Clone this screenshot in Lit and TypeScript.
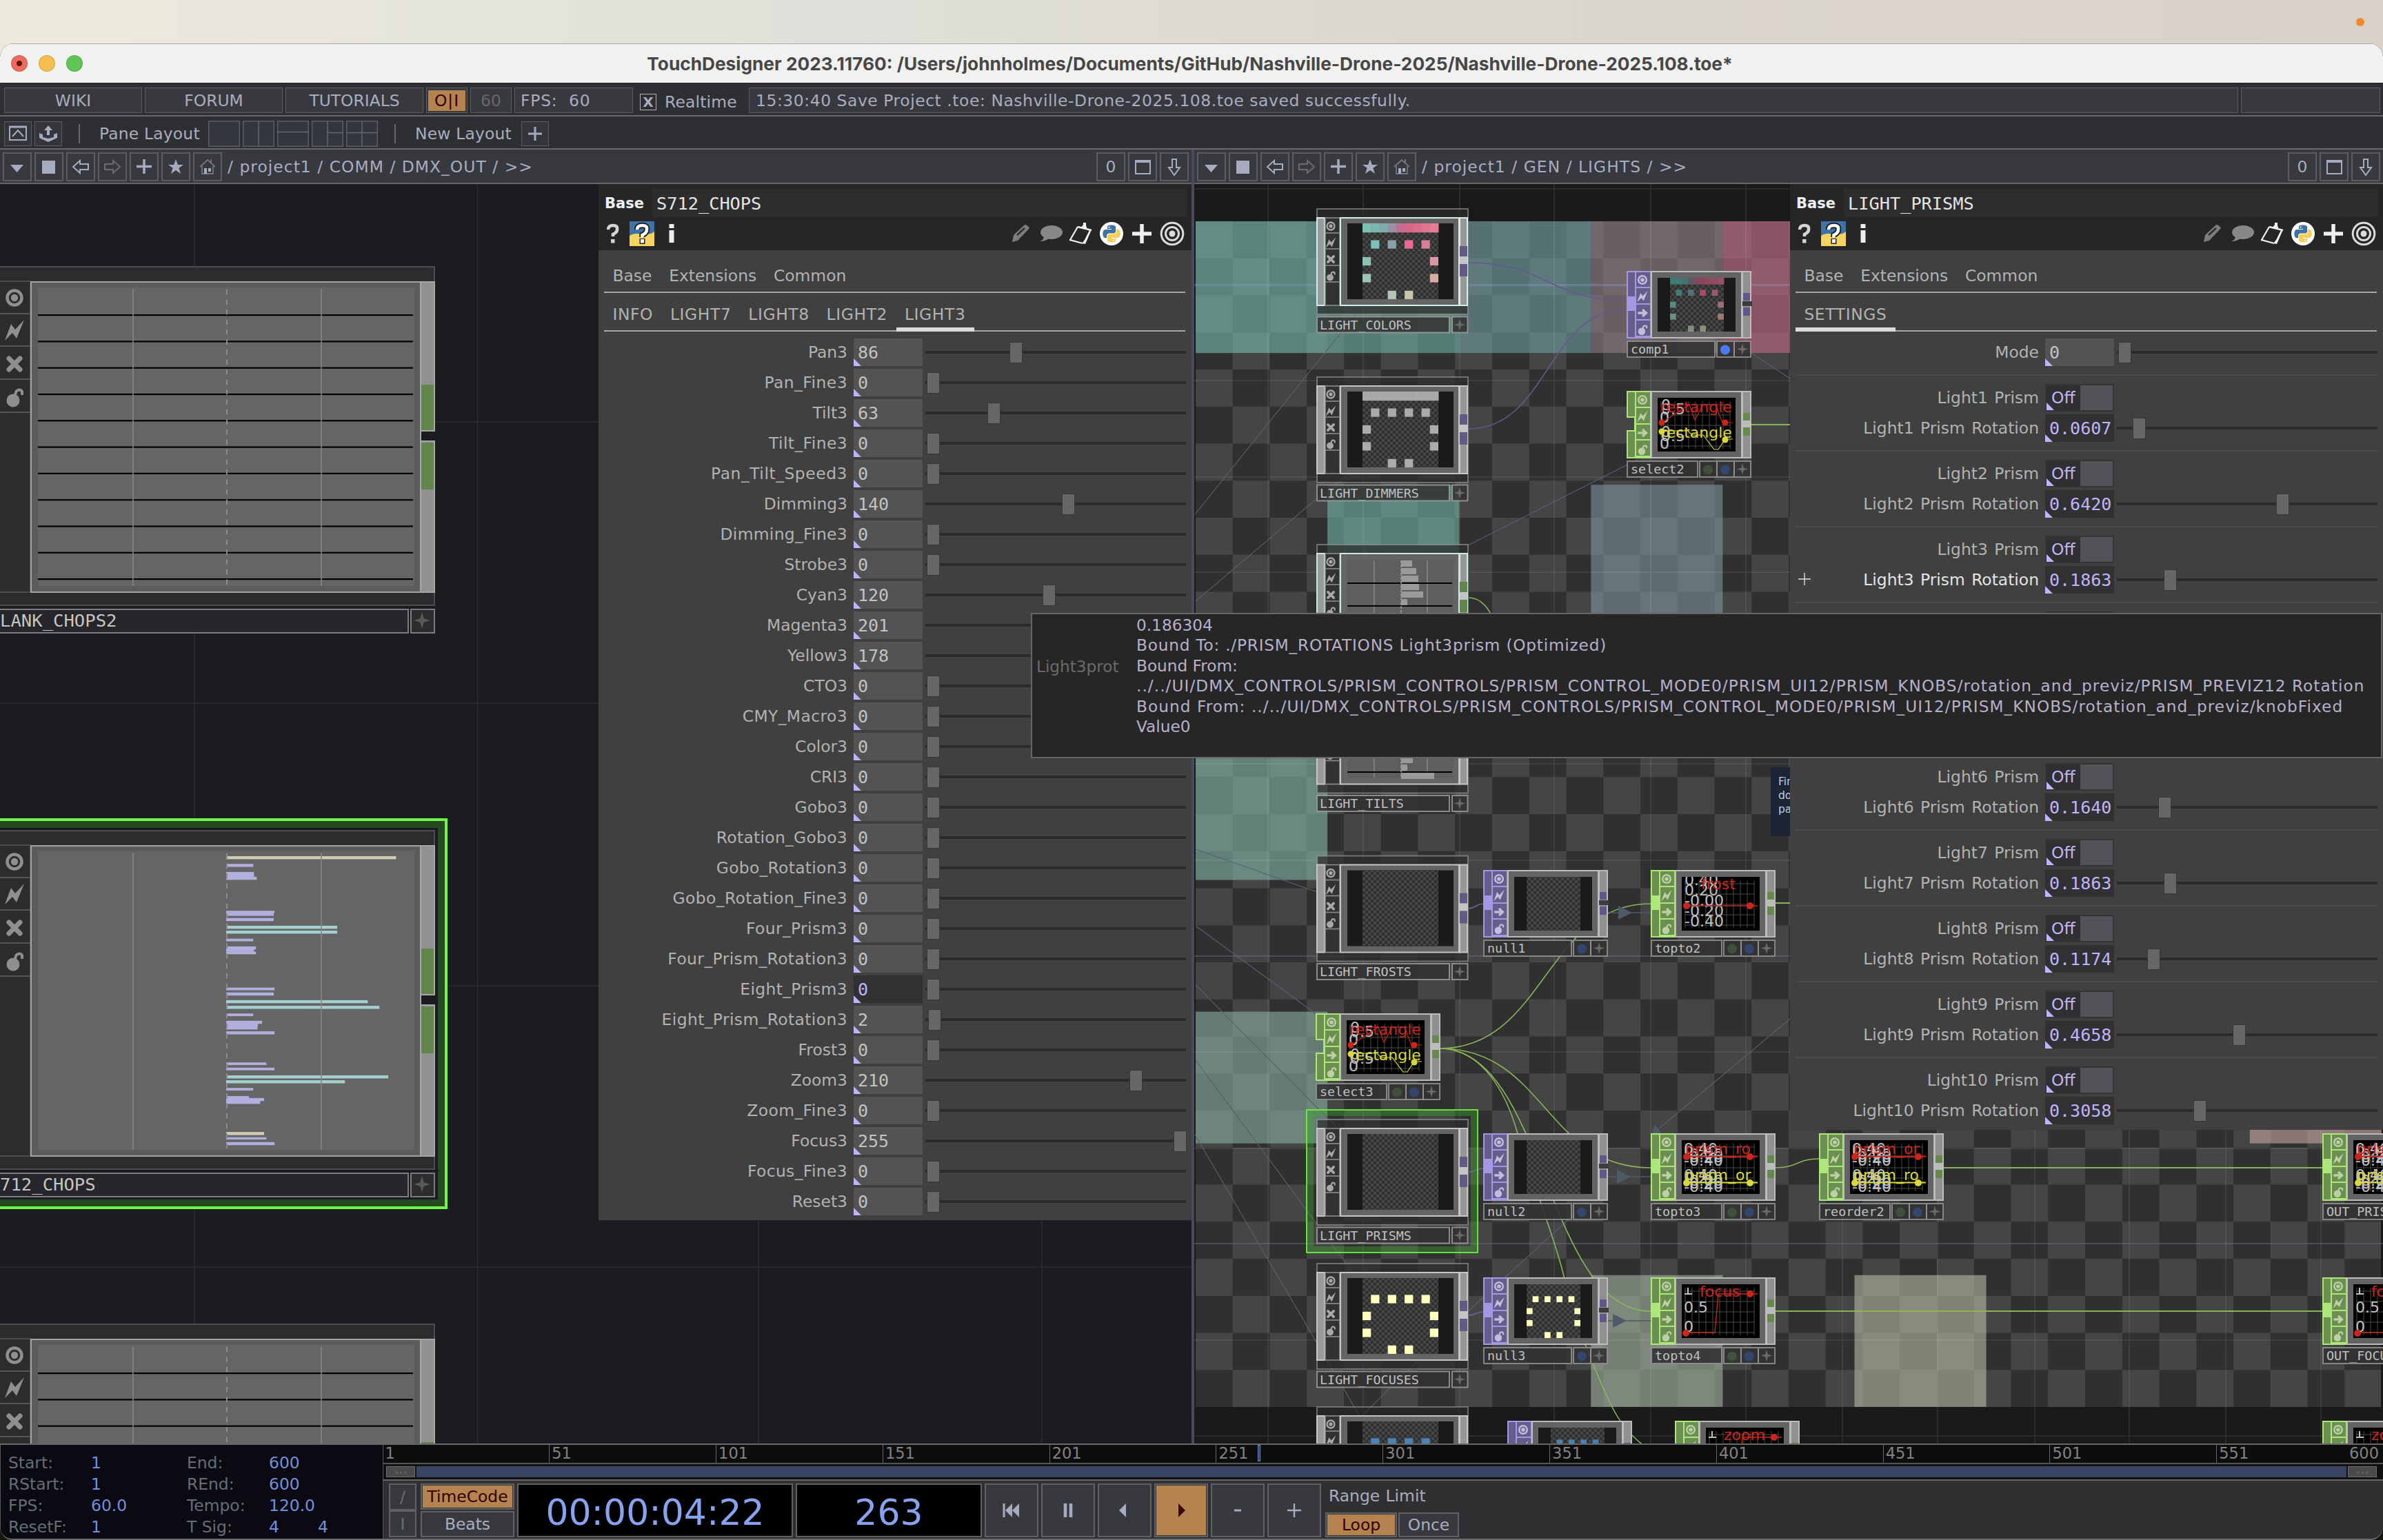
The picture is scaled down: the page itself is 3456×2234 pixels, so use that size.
import { LitElement, html, svg, css, nothing } from "lit";
import { customElement, property } from "lit/decorators.js";

/* ---------- shared data ---------- */

const PY_BLUE =
  "M14.25.18l.9.2.73.26.59.3.45.32.34.34.25.34.16.33.1.3.04.26.02.2-.01.13V8.5l-.05.63-.13.55-.21.46-.26.38-.3.31-.33.25-.35.19-.35.14-.33.1-.3.07-.26.04-.21.02H8.77l-.69.05-.59.14-.5.22-.41.27-.33.32-.27.35-.2.36-.15.37-.1.35-.07.32-.04.27-.02.21v3.06H3.17l-.21-.03-.28-.07-.32-.12-.35-.18-.36-.26-.36-.36-.35-.46-.32-.59-.28-.73-.21-.88-.14-1.05-.05-1.23.06-1.22.16-1.04.24-.87.32-.71.36-.57.4-.44.42-.33.42-.24.4-.16.36-.1.32-.05.24-.01h.16l.06.01h8.16v-.83H6.18l-.01-2.75-.02-.37.05-.34.11-.31.17-.28.25-.26.31-.23.38-.2.44-.18.51-.15.58-.12.64-.1.71-.06.77-.04.84-.02 1.27.05zm-6.3 1.98l-.23.33-.08.41.08.41.23.34.33.22.41.09.41-.09.33-.22.23-.34.08-.41-.08-.41-.23-.33-.33-.22-.41-.09-.41.09z";
const PY_YELLOW =
  "M21.1 6.11l.28.06.32.12.35.18.36.27.36.35.35.47.32.59.28.73.21.88.14 1.04.05 1.23-.06 1.23-.16 1.04-.24.86-.32.71-.36.57-.4.45-.42.33-.42.24-.4.16-.36.09-.32.05-.24.02-.16-.01h-8.22v.82h5.84l.01 2.76.02.36-.05.34-.11.31-.17.29-.25.25-.31.24-.38.2-.44.17-.51.15-.58.13-.64.09-.71.07-.77.04-.84.01-1.27-.04-1.07-.14-.9-.2-.73-.25-.59-.3-.45-.33-.34-.34-.25-.34-.16-.33-.1-.3-.04-.25-.02-.2.01-.13v-5.34l.05-.64.13-.54.21-.46.26-.38.3-.32.33-.24.35-.2.35-.14.33-.1.3-.06.26-.04.21-.02.13-.01h5.84l.69-.05.59-.14.5-.21.41-.28.33-.32.27-.35.2-.36.15-.36.1-.35.07-.32.04-.28.02-.21V6.07h2.09l.14.01zm-6.47 14.25l-.23.33-.08.41.08.41.23.33.33.23.41.08.41-.08.33-.23.23-.33.08-.41-.08-.41-.23-.33-.33-.23-.41-.08-.41.08z";

const TEAL = "#a6d0cf";
const LILAC = "#b0afde";
const SAND = "#d0ceb2";

/* ---------- node drawing helpers ---------- */

type Flag = "view" | "bolt" | "cross" | "lock" | "arrow";

function flagIcon(kind: Flag, x: number, y: number, s: number, c: string) {
  const t = `translate(${x} ${y}) scale(${s})`;
  switch (kind) {
    case "view":
      return svg`<g transform=${t}><circle r="10.5" fill="none" stroke=${c} stroke-width="4.5"/><circle r="5.2" fill=${c}/></g>`;
    case "bolt":
      return svg`<path transform=${t} fill=${c} d="M-14 15L-5-9L1-1L14-15L3 12L-3 4Z"/>`;
    case "cross":
      return svg`<path transform=${t} stroke=${c} stroke-width="7" stroke-linecap="round" d="M-8-8L8 8M8-8L-8 8"/>`;
    case "lock":
      return svg`<g transform=${t}><circle cx="-2" cy="5" r="9.5" fill=${c}/><path d="M1-3L2-7A5 5 0 0 1 11-8V-3" fill="none" stroke=${c} stroke-width="4"/></g>`;
    default:
      return svg`<path transform=${t} fill="none" stroke=${c} stroke-width="6" d="M-12 0H8M0-9L10 0L0 9"/>`;
  }
}

const star = (x: number, y: number, r: number, c = "#6a6a6a") => {
  const k = r * 0.22;
  return svg`<path fill=${c} d="M${x} ${y - r}L${x + k} ${y - k}L${x + r} ${y}L${x + k} ${y + k}L${x} ${y + r}L${x - k} ${y + k}L${x - r} ${y}L${x - k} ${y - k}Z"/>`;
};

const rect = (x: number, y: number, w: number, h: number, fill: string, stroke = "none", sw = 2, o = 1) =>
  svg`<rect x=${x} y=${y} width=${w} height=${h} fill=${fill} stroke=${stroke} stroke-width=${sw} opacity=${o} />`;

const range = (n: number) => Array.from({ length: n }, (_, i) => i);

/* Large operator in the left network */
function bigNode(name: string, top: number, body: unknown) {
  const b = top + 21;
  return svg`
    ${rect(-4, top, 634, 491, "#2b2d2c", "#4c4d52", 2)}
    ${rect(-4, b, 48, 451, "#2b2d2c", "#4c4d52")}
    ${[47, 94, 142, 190].map((d) => svg`<line x1="0" x2="44" y1=${b + d} y2=${b + d} stroke="#55565b" stroke-width="2"/>`)}
    ${flagIcon("view", 21, b + 24, 1, "#8f8f8f")}
    ${flagIcon("bolt", 21, b + 71, 1, "#8f8f8f")}
    ${flagIcon("cross", 21, b + 120, 1, "#8f8f8f")}
    ${flagIcon("lock", 21, b + 168, 1, "#8f8f8f")}
    ${rect(45, b + 1, 565, 450, "#5c5c5c", "#a2a2a2")}
    ${rect(55, b + 9, 546, 433, "#656565")}
    ${body}
    ${[193, 466].map((x) => svg`<line x1=${x} x2=${x} y1=${b + 11} y2=${b + 442} stroke="#868686" stroke-width="1.6"/>`)}
    <line x1="329" x2="329" y1=${b + 12} y2=${b + 440} stroke="#8c8c8c" stroke-width="2" stroke-dasharray="7.5 7"/>
    ${rect(610, b + 1, 20, 450, "#919191", "#a6a6a6")}
    ${rect(611, b + 150, 18, 66, "#63854b")}
    ${rect(611, b + 217, 21, 14, "#1b1c20")}
    <path d=${`M610 ${b + 217}H631M610 ${b + 232}H631`} stroke="#a6a6a6" stroke-width="2"/>
    ${rect(611, b + 234, 18, 68, "#63854b")}
    ${rect(-4, top + 492, 640, 3, "#1b1c20")}
    ${rect(-4, top + 497, 596, 34, "#26262a", "#7c7c80")}
    ${rect(596, top + 497, 34, 34, "#2b2d2c", "#7c7c80")}
    ${star(612, top + 513, 12, "#57595a")}
    <text x="0" y=${top + 522} class="big">${name}</text>`;
}

/* 9 × 9 fixture layout shown inside TOP viewers */
function fixtures(x: number, y: number, size: number, c: string[], strip?: string[]) {
  const u = size / 9;
  const cells = [[1, 2], [3, 2], [5, 2], [7, 2], [0, 4], [8, 4], [0, 6], [8, 6], [3, 8], [5, 8]];
  return svg`
    ${strip ? strip.map((s, i) => rect(x + i * u, y, u + 0.5, u + 1, s)) : nothing}
    ${cells.map(([cx, cy], i) => rect(x + cx * u, y + cy * u, u, u, c[i % c.length]))}`;
}

function compNode(name: string, y: number, view: unknown, green = false, tint = "#c6c6c6") {
  const x = 1909;
  const seps = [36, 59, 83, 107];
  const out = green ? "#638547" : "#635a88";
  const flags: Flag[] = ["view", "bolt", "cross", "lock"];
  return svg`
    ${rect(x + 1, y + 1, 219, 153, "#2c2c2c", "#8a8a8a", 2, 0.72)}
    ${rect(x + 1, y + 14, 11, 127, "#9a9a9a", tint, 2)}
    ${rect(x + 13, y + 14, 21, 127, "#323232", "#8c8c8c", 1.6)}
    ${seps.map((d) => svg`<line x1=${x + 13} x2=${x + 34} y1=${y + d} y2=${y + d} stroke="#8c8c8c" stroke-width="1.6"/>`)}
    ${flags.map((f, i) => flagIcon(f, x + 21, y + 26 + i * 24, 0.52, "#a8a8a8"))}
    ${rect(x + 35, y + 14, 172, 127, "#646464", tint, 2)}
    ${view}
    ${rect(x + 208, y + 14, 11, 127, "#979797", tint, 2)}
    ${rect(x + 208, y + 55, 11, 15, out)}
    ${rect(x + 208, y + 70, 11, 11, "#c4c4c4")}
    ${rect(x + 208, y + 81, 11, 18, out)}
    ${rect(x + 1, y + 157.5, 192, 23, "#333", "#9a9a9a", 2, 0.85)}
    ${rect(x + 197, y + 157.5, 22.5, 23, "#333", "#9a9a9a", 2, 0.85)}
    ${star(x + 208, y + 169, 8.5)}
    <text x=${x + 5} y=${y + 175.5} class="name">${name}</text>`;
}

const compTop = (y: number, inner: unknown = nothing) => svg`
  ${rect(1954, y + 22, 154, 110, "#1a1a1a")}
  ${rect(1976, y + 22, 110, 110, "url(#fine)")}
  ${inner}`;

function compChop(y: number, bars: [number, number][], lines: number[]) {
  return svg`
    ${rect(1954, y + 22, 154, 110, "#5e5e5e")}
    ${[1993, 2070].map((x) => svg`<line x1=${x} x2=${x} y1=${y + 24} y2=${y + 132} stroke="#868686" stroke-width="1.6"/>`)}
    ${lines.map((l) => rect(1954, l - 1, 152, 2, "#000"))}
    ${bars.map(([by, w]) => rect(2032, by, w, 9, "#9a9a9a"))}
    <line x1="2032" x2="2032" y1=${y + 24} y2=${y + 132} stroke="#999" stroke-width="1.6" stroke-dasharray="4 2"/>`;
}

interface OpOpts {
  green?: boolean;
  dots?: number;
  inputs?: "one" | "split";
  blueOn?: boolean;
}

function opNode(name: string, x: number, y: number, view: unknown, o: OpOpts = {}) {
  const h = 98;
  const g = o.green;
  const edge = g ? "#aee67c" : "#a597e2";
  const fill = g ? "#6b8f50" : "#665d8c";
  const glyph = g ? "#bcd0a4" : "#c4bdd8";
  const out = g ? "#678a4c" : "#60578a";
  const dots = o.dots ?? (g ? 2 : 1);
  const lw = dots === 2 ? 102 : 127;
  const flags: Flag[] = ["view", "bolt", "arrow", "lock"];
  return svg`
    ${o.inputs === "split"
      ? svg`<path fill=${fill} stroke=${edge} stroke-width="2" d=${`M${x + 1} ${y + 1}H${x + 13}V${y + h - 1}H${x + 1}V${y + 58}H${x + 12}V${y + 38}H${x + 1}Z`}/>`
      : svg`${rect(x + 1, y + 1, 12, h - 2, fill, edge)}${rect(x, y + 37, 13, 21, edge)}`}
    ${rect(x + 13, y + 1, 22, h - 2, fill, edge)}
    ${[24, 48, 71, 95].map((d) => svg`<line x1=${x + 13} x2=${x + 35} y1=${y + d} y2=${y + d} stroke=${edge} stroke-width="2"/>`)}
    ${flags.map((f, i) => flagIcon(f, x + 23, y + 13 + i * 24, 0.55, glyph))}
    ${rect(x + 36, y + 1, 131, h - 2, "#636363", "#bcbcbc")}
    ${view}
    ${rect(x + 168, y + 1, 12, h - 2, "#909090", "#bcbcbc")}
    ${rect(x + 169, y + 32, 10, 11, out)}
    ${g ? rect(x + 167, y + 43, 13, 10, "#bcbcbc") : rect(x + 168, y + 44, 14, 7, "#3c3c3c")}
    ${rect(x + 169, y + 53, 10, 12, out)}
    ${rect(x + 1, y + 102, lw, 23, "#333", "#8e8e8e", 2, 0.9)}
    ${rect(x + lw + 4, y + 102, 176 - lw, 23, "#333", "#8e8e8e", 2, 0.9)}
    ${dots === 2 ? svg`<line x1=${x + 131} x2=${x + 131} y1=${y + 102} y2=${y + 125} stroke="#8e8e8e" stroke-width="2"/><circle cx=${x + 118} cy=${y + 114.5} r="7" fill="#40503a"/>` : nothing}
    <line x1=${x + 156} x2=${x + 156} y1=${y + 102} y2=${y + 125} stroke="#8e8e8e" stroke-width="2"/>
    <circle cx=${x + 143} cy=${y + 114.5} r="7" fill=${o.blueOn ? "#4a7bf0" : "#34466c"}/>
    ${star(x + 168, y + 113.5, 8.5)}
    <text x=${x + 6} y=${y + 120} class="name">${name}</text>`;
}

const opTop = (x: number, y: number, inner: unknown = nothing) => svg`
  ${rect(x + 45, y + 10, 113, 78, "#1a1a1a")}
  ${rect(x + 63, y + 10, 78, 78, "url(#fine)")}
  ${inner}`;

function plot(x: number, y: number, kind: string) {
  const vx = x + 45;
  const vy = y + 10;
  const red = "#cb261c";
  const yel = "#d8d83c";
  const grid = svg`<path stroke="#4a4a4a" stroke-width="1" fill="none" d=${range(11).map((i) => `M${vx + 5 + i * 10} ${vy + 5}V${vy + 74}`).join("") + range(5).map((i) => `M${vx + 4} ${vy + 10 + i * 15}H${vx + 106}`).join("")}/>`;
  let body: unknown;
  if (kind === "rectangle") {
    body = svg`
      <text x=${vx + 5} y=${vy + 24} class="ax">0.5</text><text x=${vx + 5} y=${vy + 18} class="ax">0</text><text x=${vx + 3} y=${vy + 36} class="ax">0</text>
      <text x=${vx + 5} y=${vy + 63} class="ax">0.5</text><text x=${vx + 5} y=${vy + 57} class="ax">0</text><text x=${vx + 3} y=${vy + 74} class="ax">0</text>
      <path fill="none" stroke=${red} stroke-width="1.2" d=${`M${vx + 6} ${vy + 36}L${vx + 46} ${vy + 10}L${vx + 54} ${vy + 32}L${vx + 66} ${vy + 10}H${vx + 84}L${vx + 94} ${vy + 36}H${vx + 109}`}/>
      <path fill="none" stroke=${yel} stroke-width="1.2" d=${`M${vx + 6} ${vy + 48}H${vx + 44}L${vx + 50} ${vy + 54}H${vx + 66}L${vx + 82} ${vy + 75}H${vx + 88}L${vx + 98} ${vy + 60}H${vx + 109}`}/>
      <text x=${vx + 4} y=${vy + 21} fill=${red} class="ch">rectangle</text>
      <text x=${vx + 4} y=${vy + 58} fill=${yel} class="ch">rectangle</text>
      <circle cx=${vx + 6} cy=${vy + 36} r="4.6" fill=${red}/><circle cx=${vx + 98} cy=${vy + 36} r="4.6" fill=${red}/>
      <circle cx=${vx + 6} cy=${vy + 49} r="4.6" fill=${yel}/><circle cx=${vx + 98} cy=${vy + 61} r="4.6" fill=${yel}/>`;
  } else if (kind === "frost") {
    body = svg`
      ${[["0.40", 12], ["0.20", 27], ["-0.00", 42], ["-0.20", 57], ["-0.40", 72]].map(([t, d]) => svg`<text x=${vx + 4} y=${vy + Number(d)} class="ax">${t}</text>`)}
      <path stroke=${red} stroke-width="1.6" d=${`M${vx + 5} ${vy + 42}H${vx + 110}`}/>
      <text x=${vx + 28} y=${vy + 18} fill=${red} class="ch">frost</text>
      <circle cx=${vx + 7} cy=${vy + 42} r="5" fill=${red}/><circle cx=${vx + 99} cy=${vy + 42} r="5" fill=${red}/>`;
  } else if (kind.startsWith("prism")) {
    const [a, b] = kind === "prism-ro" ? ["prism_ro", "prism_or"] : ["prism_or", "prism_ro"];
    const stack = (o: number) => [["0.40", 20], ["0.20", 24], ["-0.00", 28], ["-0.20", 32], ["-0.40", 37]].map(([t, d]) => svg`<text x=${vx + 3} y=${vy + Number(d) + o} class="ax">${t}</text>`);
    body = svg`
      ${stack(0)}${stack(38)}
      <path stroke=${red} stroke-width="2" d=${`M${vx + 5} ${vy + 23.5}H${vx + 110}`}/>
      <path stroke=${yel} stroke-width="2" d=${`M${vx + 5} ${vy + 61.5}H${vx + 110}`}/>
      <text x=${vx + 5} y=${vy + 20} fill=${red} class="ch">${a}</text>
      <text x=${vx + 5} y=${vy + 58} fill=${yel} class="ch">${b}</text>
      <circle cx=${vx + 7} cy=${vy + 24} r="5" fill=${red}/><circle cx=${vx + 99} cy=${vy + 24} r="5" fill=${red}/>
      <circle cx=${vx + 7} cy=${vy + 62} r="5" fill=${yel}/><circle cx=${vx + 99} cy=${vy + 62} r="5" fill=${yel}/>`;
  } else {
    body = svg`
      <path d=${`M${vx + 9} ${vy + 5}V${vy + 14}M${vx + 4} ${vy + 14}H${vx + 15}`} stroke="#c0c0c0" stroke-width="2"/>
      <text x=${vx + 3} y=${vy + 41} class="ax">0.5</text><text x=${vx + 3} y=${vy + 69} class="ax">0</text>
      <path fill="none" stroke=${red} stroke-width="1.4" d=${`M${vx + 6} ${vy + 70}H${vx + 48}L${vx + 53} ${vy + 14}H${vx + 110}`}/>
      <text x=${vx + 26} y=${vy + 18} fill=${red} class="ch">${kind}</text>
      <circle cx=${vx + 6} cy=${vy + 71} r="5" fill=${red}/><circle cx=${vx + 99} cy=${vy + 14} r="5" fill=${red}/>`;
  }
  return svg`<svg x=${vx} y=${vy} width="113" height="78" viewBox=${`${vx} ${vy} 113 78`}>
    ${rect(vx, vy, 113, 78, "#000")}${grid}${body}</svg>`;
}

const wire = (x1: number, y1: number, x2: number, y2: number, c: string) => {
  const m = (x1 + x2) / 2;
  return svg`<path fill="none" stroke=${c} stroke-width="1.6" d=${`M${x1} ${y1}C${m} ${y1} ${m} ${y2} ${x2} ${y2}`}/>`;
};

/* ---------- left network ---------- */

@customElement("network-left")
export class NetworkLeft extends LitElement {
  static styles = css`
    :host { display: block; }
    svg { display: block; }
    .big { font: 25.6px "DejaVu Sans Mono", monospace; fill: #c4c4c4; }
  `;
  render() {
    const k = 0.5867;
    const bars: [number, number, number, string][] = [
      [104, 111, 1023, SAND], [123, 130, 654, LILAC], [143, 155, 656, LILAC], [155, 162, 663, LILAC],
      [239, 244, 709, LILAC], [244, 251, 707, LILAC], [257, 264, 707, LILAC], [276, 283, 871, TEAL],
      [288, 295, 871, TEAL], [308, 314, 654, LILAC], [327, 334, 661, LILAC], [334, 340, 656, LILAC],
      [340, 346, 661, LILAC], [429, 435, 709, LILAC], [441, 448, 707, LILAC], [460, 467, 950, TEAL],
      [474, 481, 980, TEAL], [493, 499, 654, LILAC], [511, 518, 677, LILAC], [518, 525, 666, LILAC],
      [525, 532, 665, LILAC], [537, 544, 709, LILAC], [614, 620, 688, LILAC], [627, 633, 709, LILAC],
      [646, 653, 1003, TEAL], [658, 665, 891, TEAL], [677, 683, 654, LILAC], [697, 702, 643, LILAC],
      [702, 709, 682, LILAC], [709, 716, 672, LILAC], [786, 793, 682, SAND], [799, 804, 688, LILAC],
      [811, 818, 709, LILAC],
    ];
    const flat = (start: number, n: number) => range(n).map((i) => rect(55, start + i * 38.3 - 1, 544, 2.2, "#000"));
    return html`<svg width="1728" height="1828" viewBox="0 266 1728 1828">
      ${rect(0, 266, 1728, 1828, "#1b1c20")}
      <path stroke="#2b2c32" stroke-width="1.5" d="M282 266V2094M692.5 266V2094M1100 266V2094M1511 266V2094M0 611H1728M0 1019H1728M0 1429H1728M0 1837H1728"/>
      ${bigNode("LANK_CHOPS2", 386, flat(456, 11))}
      ${rect(-8, 1188, 655, 563, "#234a20", "#70f848", 4)}
      ${rect(-8, 1200, 643, 539, "#1b1c20")}
      ${bigNode("712_CHOPS", 1204, bars.map(([a, b, x2, c]) => rect(328, 1180 + a * k, (x2 - 584) * 0.5612, (b - a) * k + 0.3, c)))}
      ${bigNode("", 1920, flat(1991, 11))}
    </svg>`;
  }
}

/* ---------- right network ---------- */

@customElement("network-right")
export class NetworkRight extends LitElement {
  static styles = css`
    :host { display: block; }
    svg { display: block; }
    .name { font: 18.4px "DejaVu Sans Mono", monospace; fill: #c0c0c0; }
    .ch { font: 22px "DejaVu Sans", sans-serif; }
    .ax { font: 22px "DejaVu Sans", sans-serif; fill: #c0c0c0; }
    .note { font: 15.5px "DejaVu Sans", sans-serif; fill: #c8ccd8; }
  `;
  render() {
    const tiles: [number, number, string][] = [
      [0, 0, "#79c0b2"], [1, 0, "#70b4a6"], [2, 0, "#72a0a4"], [3, 0, "#94808c"], [4, 0, "#cc6c88"],
      [1, 2, "#72b8a8"], [3, 2, "#8098a2"],
      [0, 4, "#84bcac"], [0, 6, "#8cb4a4"],
      [3, 8, "#a8b8a4"], [5, 8, "#bcbca6"], [8, 6, "#cca8a4"],
    ];
    const yellow = ["#ffffbe"];
    const blue = ["#4a82b4"];
    const P = "#64598f";
    const G = "#87b45c";
    const ref = "#566072";
    const vx = [1839, 1977, 2117, 2254, 2394, 2532, 2672, 2810, 2951, 3088, 3228, 3366];
    const hy = [273, 551, 691, 829, 968, 1107, 1247, 1525, 1665, 1943, 2082];
    const small = ["#3f8076", "#54707a", "#a84a68", "#9a5a6c", "#5a8a80", "#9a7078", "#6a8e80", "#9a7a78", "#808e80", "#8e8e7c"];
    const tall = ["#7cbfb4", "#8aa0aa", "#ea6c92", "#d68098", "#8cc0b4", "#d69aa2", "#9cc4b2", "#d8aca6", "#b4c4b4", "#c8c4b0"];
    return html`<svg width="1724" height="1828" viewBox="1732 266 1724 1828">
      <defs>
        <pattern id="board" x="1734" y="320" width="107.5" height="107.5" patternUnits="userSpaceOnUse">
          <rect width="107.5" height="107.5" fill="#303030"/>
          <rect width="53.75" height="53.75" fill="#454545"/>
          <rect x="53.75" y="53.75" width="53.75" height="53.75" fill="#454545"/>
        </pattern>
        <pattern id="fine" width="8" height="8" patternUnits="userSpaceOnUse">
          <rect width="8" height="8" fill="#303030"/><rect width="4" height="4" fill="#454545"/><rect x="4" y="4" width="4" height="4" fill="#454545"/>
        </pattern>
      </defs>
      ${rect(1732, 266, 1724, 1828, "#1a1a1a")}
      ${rect(1734, 320, 1719, 1720, "url(#board)")}
      ${tiles.map(([c, r, f]) => rect(1734 + c * 191.1, 320 + r * 191.1, 191.1, 191.1, f, "none", 0, 0.58))}
      <path stroke="#fff" stroke-opacity=".1" stroke-width="1.5" d=${vx.map((x) => `M${x} 266V2094`).join("") + hy.map((y) => `M1732 ${y}H3456`).join("")}/>
      <path stroke="#8c9cd0" stroke-opacity=".55" stroke-width="1.2" d="M1732 411.5H3456M1732 413.5H3456"/>
      <path stroke="#7c7c9c" stroke-opacity=".5" stroke-width="1.5" d="M1732 1386H3456M1732 1803H3456"/>
      <path stroke=${ref} fill="none" stroke-width="1.1" d="M1733 745L1984 433M1734 871L1909 723L1964 680M2080 815L2380 663M2538 510L2596 548M1734 1231L1950 1307M1734 1342L1944 1496M1734 1428L1949 1645M1734 1537L1965 1849M1733 1645L1977 2062M2640 1440L2405 1637M2302 1743L2185 1850L2123 1907M2065 1965L1942 2085"/>
      ${wire(2130, 380, 2359, 435, P)}${wire(2130, 621, 2359, 448, P)}
      ${wire(2130, 866, 2210, 940, G)}
      ${wire(2130, 1317, 2151, 1310, "#6d63a0")}${wire(2130, 1699, 2151, 1694, "#6d63a0")}${wire(2130, 1907, 2151, 1902, "#6d63a0")}
      ${wire(2088, 1520, 2394, 1310, G)}${wire(2088, 1520, 2394, 1693, G)}${wire(2088, 1520, 2394, 1901, G)}
      <path fill="none" stroke=${G} stroke-width="1.6" d="M2088 1520C2150 1520 2184 1585 2200 1640S2262 1815 2270 1860S2324 2012 2338 2040S2368 2084 2384 2096"/>
      <path fill="none" stroke=${G} stroke-width="1.8" d="M2540 615H2600M2575 1309H2600M2818 1693H3368M2575 1901H3368"/>
      ${wire(2575, 1693, 2638, 1680, G)}
      <path stroke="#4d5a68" stroke-width="1.6" d="M2332 1323H2394M2332 1706H2394M2332 1915H2394"/>
      <path fill="#4d5a68" d="M2347 1313L2367 1323L2347 1333ZM2345 1696L2365 1706L2345 1716ZM2339 1905L2359 1915L2339 1925ZM2400 1630L2409 1643H2396Z"/>

      ${compNode("LIGHT_COLORS", 301, compTop(301, fixtures(1976, 323, 110, tall, ["#7cc0b4", "#7ab8ae", "#7dacac", "#9a90a4", "#c26e92", "#d8668a", "#dc6c8c", "#e0748f", "#e27d92"])), false, "#d6ecea")}
      ${compNode("LIGHT_DIMMERS", 545, compTop(545, fixtures(1976, 567, 110, ["#ababab"], Array(9).fill("#a8a8a8"))))}
      ${compNode("", 788, compChop(788, [[812, 16], [823, 22], [834, 25], [846, 26], [857, 32], [868, 9], [888, 17]], [845, 878]), true, "#d0e6e2")}
      ${compNode("LIGHT_TILTS", 995.5, compChop(995.5, [[1097, 17], [1108, 9], [1120, 48]], [1119]), true)}
      ${compNode("LIGHT_FROSTS", 1239.5, compTop(1239.5))}
      <path fill="#3cb428" fill-opacity=".36" fill-rule="evenodd" stroke="#6ef848" stroke-width="0" d="M1895 1609H2143V1816H1895ZM1905 1618V1807H2133V1618Z"/>
      <rect x="1895" y="1609" width="248" height="207" fill="none" stroke="#6af044" stroke-width="1.8"/>
      ${compNode("LIGHT_PRISMS", 1622, compTop(1622))}
      ${compNode("LIGHT_FOCUSES", 1831, compTop(1831, fixtures(1976, 1853, 110, yellow)))}
      ${compNode("", 2039, compTop(2039, fixtures(1976, 2061, 110, blue)))}

      ${opNode("comp1", 2359, 392, opTop(2359, 392, fixtures(2422, 402, 78, small, ["#3f7a72", "#417a72", "#45706e", "#5c5a68", "#804a62", "#8c4460", "#904860", "#904c62", "#945264"])), { blueOn: true })}
      ${opNode("select2", 2359, 566, plot(2359, 566, "rectangle"), { green: true, inputs: "split" })}
      ${opNode("null1", 2151, 1261, opTop(2151, 1261))}
      ${opNode("topto2", 2394, 1261, plot(2394, 1261, "frost"), { green: true })}
      ${opNode("select3", 1908, 1469, plot(1908, 1469, "rectangle"), { green: true, inputs: "split" })}
      ${opNode("null2", 2151, 1643, opTop(2151, 1643))}
      ${opNode("topto3", 2394, 1643, plot(2394, 1643, "prism-ro"), { green: true })}
      ${opNode("reorder2", 2638, 1643, plot(2638, 1643, "prism-or"), { green: true })}
      ${opNode("null3", 2151, 1852, opTop(2151, 1852, fixtures(2214, 1862, 78, yellow)))}
      ${opNode("topto4", 2394, 1852, plot(2394, 1852, "focus"), { green: true })}
      ${opNode("", 2186, 2060, opTop(2186, 2060, fixtures(2249, 2070, 78, blue)))}
      ${opNode("", 2429, 2060, plot(2429, 2060, "zoom"), { green: true })}
      ${opNode("OUT_PRISMS", 3368, 1643, plot(3368, 1643, "prism-ro"), { green: true })}
      ${opNode("OUT_FOCUS", 3368, 1852, plot(3368, 1852, "focus"), { green: true })}
      ${opNode("", 3368, 2060, plot(3368, 2060, "zoom"), { green: true })}

      ${rect(2568, 1112, 60, 100, "#1d2434")}
      <text x="2579" y="1138" class="note">Fin</text>
      <text x="2579" y="1158" class="note">do</text>
      <text x="2579" y="1178" class="note">pa</text>
    </svg>`;
  }
}

/* ---------- parameter panel ---------- */

interface Par {
  label: string;
  value: string;
  pos?: number;
  kind?: "toggle" | "bound" | "plain";
  hot?: boolean;
  sep?: boolean;
}

/* Underscores are set wide, so the extra width is spread over the label */
const tracking = (s: string) => ((s.split("_").length - 1) * 4.2) / s.length;

@customElement("param-panel")
export class ParamPanel extends LitElement {
  @property() name = "";
  @property({ attribute: false }) tabs: string[] = [];
  @property() active = "";
  @property({ attribute: false }) pars: Par[] = [];

  static styles = css`
    :host { display: flex; flex-direction: column; background: #404040; font: 23.4px "DejaVu Sans", sans-serif; color: #b2b2b2; }
    svg { display: block; }
    .head { background: #262626; height: 96px; box-sizing: border-box; padding: 7px 7px 0 9px; }
    .title { display: flex; align-items: center; }
    .base { font-weight: bold; font-size: 21px; color: #f0f0f0; width: 69px; padding-top: 1px; box-sizing: border-box; }
    .field { flex: 1; height: 41px; background: #2d2d2d; color: #e4e4e4; font: 25.3px/43px "DejaVu Sans Mono", monospace; padding-left: 6px; box-sizing: border-box; }
    .tools { display: flex; justify-content: space-between; align-items: center; height: 36px; padding: 6px 3px 0 0; }
    .left { display: flex; align-items: center; gap: 6px; }
    .right { display: flex; align-items: center; gap: 8px; }
    .q { margin-right: 5px; margin-left: -1px; }
    .tabs { display: flex; margin: 0 9px 0 8px; border-bottom: 2px solid #a6a6a6; box-sizing: border-box; align-items: flex-end; }
    .t1 { height: 62px; }
    .t2 { height: 56px; letter-spacing: 0.62px; }
    .tab { padding: 0 12.4px; height: 37px; line-height: 29px; box-sizing: border-box; }
    .on { border-bottom: 6px solid #dcdcdc; margin-bottom: -2px; height: 39px; }
    .list { padding-top: 10px; }
    .row { display: grid; grid-template-columns: 361px 100px 1fr; column-gap: 9px; height: 44px; align-items: start; position: relative; }
    .label { text-align: right; line-height: 41px; word-spacing: 2px; }
    .hot { color: #e4e4e4; }
    .val { position: relative; height: 40px; background: #535353; font: 25px/42px "DejaVu Sans Mono", monospace; color: #c2c2c2; padding-left: 6px; box-sizing: border-box; overflow: hidden; white-space: nowrap; }
    .val::after, .tog::after { content: ""; position: absolute; left: 0; bottom: 0; border-left: 11px solid #beb4ff; border-top: 11px solid transparent; }
    .bound { background: #313134; color: #c0b4f8; }
    .tog { position: relative; display: flex; height: 36px; border: 2px solid #343434; background: #303032; color: #c0b4f8; line-height: 36px; box-sizing: content-box; width: 96px; overflow: hidden; }
    .off { width: 42px; padding-left: 7px; }
    .knob { flex: 1; background: #525258; }
    .slider { position: relative; height: 40px; margin-left: -5px; margin-right: 8px; }
    .track { height: 4px; background: #2b2b2b; margin-top: 18px; }
    .handle { position: absolute; top: 6px; width: 17px; height: 29px; background: #666; outline: 1.5px solid #373737; margin-left: -9px; }
    .sep { height: 2px; background: #4b4b4b; margin: 8px 8px 12px; }
    .plus { position: absolute; left: 12px; top: 10px; }
  `;

  private tools() {
    return html`<div class="tools">
      <div class="left">
        <svg class="q" width="26" height="36" viewBox="0 0 26 36"><path d="M6 12Q6 6 13 6T19 12Q19 16 13 19V22" fill="none" stroke="#d4d4d4" stroke-width="4.6"/><rect x="10" y="26" width="5.5" height="5.5" fill="#d4d4d4"/></svg>
        <svg width="36" height="36" viewBox="0 0 36 36"><rect width="36" height="36" fill="#f6d463"/><path d="M0 0H36V15Q30 20 24 18H10Q4 18 0 21Z" fill="#3f72a6"/><path d="M11 12Q11 6 18.5 6T25 12Q25 17 18.5 20V23" fill="none" stroke="#222" stroke-width="8.5"/><path d="M11 12Q11 6 18.5 6T25 12Q25 17 18.5 20V23" fill="none" stroke="#fff" stroke-width="4.6"/><rect x="14.5" y="25" width="8" height="8" fill="#222"/><rect x="16" y="26" width="5" height="5.5" fill="#fff"/></svg>
        <svg width="40" height="36" viewBox="0 0 40 36"><rect x="15.5" y="4" width="7" height="6" fill="#eee"/><rect x="15.5" y="13" width="7" height="18" fill="#eee"/></svg>
      </div>
      <div class="right">
        <svg width="36" height="36" viewBox="0 0 36 36"><path d="M6 30L8 20L24 5Q28 5 31 10L14 28Z" fill="#7c7c7c"/><path d="M13 20L24 10" stroke="#2c2c2c" stroke-width="2.4"/></svg>
        <svg width="36" height="36" viewBox="0 0 36 36"><ellipse cx="19" cy="16" rx="16" ry="10" fill="#888"/><path d="M8 22Q8 27 2 29Q12 29 16 24Z" fill="#888"/></svg>
        <svg width="36" height="36" viewBox="0 0 36 36"><path d="M13 8L2 27L20 32" fill="none" stroke="#f2f2f2" stroke-width="2.2"/><path d="M13 8L33 13" stroke="#f2f2f2" stroke-width="2.4"/><path d="M33 12L24 33L19 32L23 27L30 13Z" fill="#f2f2f2"/><path d="M17 10L21 5V2H25L25 6L27 12Z" fill="#f2f2f2"/></svg>
        <svg width="36" height="36" viewBox="0 0 36 36"><circle cx="18" cy="18" r="17" fill="#fff"/><g transform="translate(5.4 5.4) scale(1.05)"><path d=${PY_BLUE} fill="#3f72a6"/><path d=${PY_YELLOW} fill="#f6cf55"/></g></svg>
        <svg width="36" height="36" viewBox="0 0 36 36"><path d="M18 4V32M4 18H32" stroke="#f0f0f0" stroke-width="5.5"/></svg>
        <svg width="36" height="36" viewBox="0 0 36 36"><circle cx="18" cy="18" r="15.8" fill="none" stroke="#dcdcdc" stroke-width="3"/><circle cx="18" cy="18" r="9.5" fill="none" stroke="#dcdcdc" stroke-width="3"/><circle cx="18" cy="18" r="4.5" fill="#dcdcdc"/></svg>
      </div>
    </div>`;
  }

  render() {
    return html`
      <div class="head">
        <div class="title"><div class="base">Base</div><div class="field">${this.name}</div></div>
        ${this.tools()}
      </div>
      <div class="tabs t1">${["Base", "Extensions", "Common"].map((t) => html`<div class="tab">${t}</div>`)}</div>
      <div class="tabs t2">${this.tabs.map((t) => html`<div class="tab ${t === this.active ? "on" : ""}">${t}</div>`)}</div>
      <div class="list">
        ${this.pars.map((p) => html`
          ${p.sep ? html`<div class="sep"></div>` : nothing}
          <div class="row">
            ${p.hot ? html`<svg class="plus" width="18" height="18"><path d="M9 0V18M0 9H18" stroke="#ddd" stroke-width="1.4"/></svg>` : nothing}
            <div class="label ${p.hot ? "hot" : ""}" style="letter-spacing:${tracking(p.label)}px">${p.label}</div>
            ${p.kind === "toggle"
              ? html`<div class="tog"><div class="off">Off</div><div class="knob"></div></div>`
              : html`<div class="val ${p.kind === "bound" ? "bound" : ""}">${p.value}</div>
                <div class="slider"><div class="track"></div><div class="handle" style="left:${11.5 + (p.pos ?? 0) * 358}px"></div></div>`}
          </div>`)}
      </div>`;
  }
}

/* ---------- pane header ---------- */

@customElement("pane-header")
export class PaneHeader extends LitElement {
  @property() path = "";
  static styles = css`
    :host { display: flex; align-items: center; height: 50px; box-sizing: border-box; padding: 1px 4px 0; gap: 4px; background: #38393e; border-bottom: 2px solid #66676b; font: 23.4px "DejaVu Sans", sans-serif; color: #a9adc0; }
    .b { width: 42px; height: 42px; box-sizing: border-box; border: 2px solid #5c5d62; display: flex; align-items: center; justify-content: center; }
    .path { flex: 1; padding-left: 4px; white-space: pre; letter-spacing: 1.04px; }
    svg { display: block; }
  `;
  render() {
    const c = "#a6abc0";
    const i = (body: unknown) => html`<div class="b"><svg width="34" height="34" viewBox="0 0 34 34">${body}</svg></div>`;
    return html`
      ${i(svg`<path d="M7 14H26L16.500 25Z" fill=${c}/>`)}
      ${i(svg`<rect x="7" y="8" width="19" height="19" fill=${c}/>`)}
      ${i(svg`<path d="M6 17L16 8V13H28V21H16V26Z" fill="none" stroke=${c} stroke-width="2"/>`)}
      ${i(svg`<path d="M28 17L18 8V13H6V21H18V26Z" fill="none" stroke="#6a6b72" stroke-width="2"/>`)}
      ${i(svg`<path d="M17 6V27M6 16.500H28" stroke=${c} stroke-width="3.500"/>`)}
      ${i(svg`<path d="M17 6L19.800 14H28L21.400 18.800L24 27L17 22L10 27L12.600 18.800L6 14H14.200Z" fill=${c}/>`)}
      ${i(svg`<path d="M6 17L17 7L28 17M9 16V27H25V16M22 11V6" fill="none" stroke="#74767e" stroke-width="1.800"/><path d="M12 19H16V27H12ZM18 19H22V24H18Z" fill=${c}/>`)}
      <div class="path">${this.path}</div>
      <div class="b">0</div>
      ${i(svg`<path d="M7 8H28V27H7Z" fill="none" stroke=${c} stroke-width="2"/><path d="M6 9H29" stroke=${c} stroke-width="4"/>`)}
      ${i(svg`<path d="M14 6H20V18H25L17 29L9 18H14Z" fill="none" stroke=${c} stroke-width="2"/>`)}`;
  }
}

/* ---------- timeline ---------- */

@customElement("time-line")
export class TimeLine extends LitElement {
  static styles = css`
    :host { display: flex; height: 140px; box-sizing: border-box; border-top: 2px solid #66676b; background: #303032; font: 23.4px "DejaVu Sans", sans-serif; color: #a9adc0; }
    .info { width: 556px; flex: none; box-sizing: border-box; background: #0b0a12; border-left: 1px solid #555; border-right: 1px solid #555; padding: 10px 0 0 11px; display: grid; grid-template-columns: 120px 139px 119px 71px 1fr; grid-template-rows: repeat(4, 31px); align-items: center; color: #646e76; }
    .v { color: #7390dc; }
    .main { flex: 1; display: flex; flex-direction: column; min-width: 0; }
    .ruler { position: relative; display: flex; height: 28px; box-sizing: border-box; background: #0d0d0d; border-bottom: 2px solid #55565a; color: #828282; overflow: hidden; }
    .tick { width: 241.8px; flex: none; box-sizing: border-box; border-left: 1.5px solid #666; padding-left: 3px; line-height: 25px; font-size: 22.5px; position: relative; left: -1.5px; }
    .last { position: absolute; right: 6px; line-height: 25px; font-size: 22.5px; }
    .head { position: absolute; left: 1268px; top: 0; width: 4px; height: 24px; box-sizing: border-box; border: 1px solid #6d88cc; background: #2f3c66; }
    .range { display: flex; align-items: center; gap: 2px; height: 24px; box-sizing: border-box; padding: 0 9px 0 4px; background: #111; border-bottom: 2px solid #66676b; }
    .grip { width: 42px; height: 16px; box-sizing: border-box; background: #4a4a4a; border: 1.5px solid #6c6c6c; display: flex; align-items: center; justify-content: center; gap: 3px; }
    .grip i { width: 3px; height: 3px; background: #606060; margin-top: 3px; }
    .bar { flex: 1; height: 16px; background: #394463; }
    .ctl { display: flex; gap: 4px; padding: 4px 0 0 8px; height: 78px; }
    .col { display: flex; flex-direction: column; gap: 2px; }
    .c1 { margin-right: 2px; gap: 0; }
    .btn { box-sizing: border-box; border: 2px solid #606166; background: #38393e; display: flex; align-items: center; justify-content: center; }
    .s { width: 40px; height: 39px; color: #6d6e76; }
    .m { width: 136px; height: 38px; }
    .lit { background: #b58350; color: #300; box-shadow: inset 0 0 0 1px #38393e; }
    .clock { width: 400px; height: 78px; box-sizing: border-box; background: #000; border: 2px solid #606166; color: #86a2f0; font-size: 52px; display: flex; align-items: center; justify-content: center; padding-top: 5px; }
    .frame { width: 270px; }
    .t { width: 78px; height: 78px; }
    .lim { padding-left: 2px; display: flex; flex-direction: column; }
    .lt { padding-left: 5px; height: 42px; line-height: 36px; word-spacing: 1px; }
    .pair { display: flex; gap: 2px; }
    .l1 { width: 104px; height: 36px; }
    .l2 { width: 88px; height: 36px; }
    svg { display: block; }
  `;
  render() {
    const c = "#a6abc0";
    const rows = [
      ["Start:", "1", "End:", "600", ""], ["RStart:", "1", "REnd:", "600", ""],
      ["FPS:", "60.0", "Tempo:", "120.0", ""], ["ResetF:", "1", "T Sig:", "4", "4"],
    ];
    const t = (body: unknown, lit = false) => html`<div class="btn t ${lit ? "lit" : ""}"><svg width="40" height="40" viewBox="0 0 40 40">${body}</svg></div>`;
    return html`
      <div class="info">${rows.map((r) => r.map((x, i) => html`<div class=${i % 2 || i === 4 ? "v" : ""}>${x}</div>`))}</div>
      <div class="main">
        <div class="ruler">
          ${range(12).map((i) => html`<div class="tick">${1 + i * 50}</div>`)}
          <div class="head"></div><div class="last">600</div>
        </div>
        <div class="range"><div class="grip"><i></i><i></i><i></i></div><div class="bar"></div><div class="grip"><i></i><i></i><i></i></div></div>
        <div class="ctl">
          <div class="col c1"><div class="btn s">/</div><div class="btn s">I</div></div>
          <div class="col"><div class="btn m lit">TimeCode</div><div class="btn m">Beats</div></div>
          <div class="clock">00:00:04:22</div>
          <div class="clock frame">263</div>
          ${t(svg`<path d="M9 10V30" stroke=${c} stroke-width="3"/><path d="M21 10V30L11 20ZM31 10V30L21 20Z" fill=${c}/>`)}
          ${t(svg`<path d="M16 10V30M24 10V30" stroke=${c} stroke-width="4.500"/>`)}
          ${t(svg`<path d="M22 10V30L12 20Z" fill=${c}/>`)}
          ${t(svg`<path d="M16 10V30L26 20Z" fill="#3a0a00"/>`, true)}
          ${t(svg`<path d="M15 20H25" stroke=${c} stroke-width="3"/>`)}
          ${t(svg`<path d="M20 10V30M10 20H30" stroke=${c} stroke-width="2.400"/>`)}
          <div class="lim"><div class="lt">Range Limit</div><div class="pair"><div class="btn l1 lit">Loop</div><div class="btn l2">Once</div></div></div>
        </div>
      </div>`;
  }
}

/* ---------- application ---------- */

@customElement("app-root")
export class AppRoot extends LitElement {
  static styles = css`
    :host { display: block; width: 3456px; height: 2234px; overflow: hidden; background: linear-gradient(90deg, #edeadc 0, #e6e5dc 18%, #dfe0d9 36%, #dcd7ce 60%, #d9d2c8 100%) 0 0 / 100% 80px no-repeat #17170c; font: 23.4px "DejaVu Sans", sans-serif; color: #a9adc0; }
    svg { display: block; }
    .desk { height: 63px; display: flex; justify-content: flex-end; align-items: center; padding-right: 27px; box-sizing: border-box; }
    .dot { width: 12px; height: 12px; border-radius: 50%; background: #ef8b2c; }
    .win { display: flex; flex-direction: column; height: 2171px; border-radius: 20px 20px 18px 18px; overflow: hidden; position: relative; background: #2e2f32; }
    .bar { display: flex; align-items: center; height: 57px; background: #f1f1ef; border-top: 1px solid #aaa9a4; box-sizing: border-box; padding-left: 16px; gap: 16px; flex: none; }
    .l { width: 24px; height: 24px; border-radius: 50%; box-sizing: border-box; border: 1px solid rgba(0, 0, 0, 0.12); display: flex; align-items: center; justify-content: center; }
    .r { background: #ec6a5e; } .y { background: #f5bf4f; } .g { background: #61c554; }
    .r i { width: 8px; height: 8px; border-radius: 50%; background: #6b1006; }
    .cap { flex: 1; padding-right: 155px; padding-left: 14px; text-align: center; font: bold 26.25px Inter, sans-serif; color: #474747; white-space: nowrap; }
    .menu { height: 49px; box-sizing: border-box; display: flex; gap: 4px; padding: 6px 4px 0 6px; border-bottom: 2px solid #66676b; border-top: 1px solid #222; flex: none; }
    .m { height: 37px; box-sizing: border-box; border: 1.5px solid #5c5d62; background: #38393e; display: flex; align-items: center; justify-content: center; padding-top: 1px; white-space: pre; }
    .w { width: 200px; }
    .io { width: 60px; padding: 2px; }
    .io b { flex: 1; height: 30px; background: #b58350; color: #300; font-weight: 400; display: flex; align-items: center; justify-content: center; letter-spacing: 1px; }
    .sixty { width: 60px; color: #66676d; }
    .fps { width: 172px; justify-content: flex-start; padding-left: 8px; letter-spacing: 0.8px; }
    .rt { display: flex; align-items: center; width: 160px; padding-left: 6px; gap: 12px; height: 41px; box-sizing: border-box; letter-spacing: 0.2px; padding-top: 1px; }
    .box { width: 24px; height: 24px; box-sizing: border-box; border: 1.5px solid #b0b0b0; display: flex; align-items: center; justify-content: center; font-weight: bold; font-size: 20px; }
    .msg { flex: 1; justify-content: flex-start; padding-left: 9px; letter-spacing: 0.57px; }
    .mr { width: 202px; }
    .lay { height: 48px; box-sizing: border-box; display: flex; align-items: center; padding: 3px 0 0 6px; border-bottom: 2px solid #66676b; flex: none; letter-spacing: 0.2px; }
    .sq { width: 40px; height: 36px; box-sizing: border-box; border: 1.5px solid #5c5d62; background: #34363b; display: flex; align-items: center; justify-content: center; margin-right: 4px; }
    .bar2 { width: 2px; height: 28px; background: #66676b; }
    .pl { margin-left: 28px; width: 158px; }
    .nl { width: 154px; }
    .lo { margin-right: 4px; }
    .a { margin-left: 20px; }
    .b { margin-left: 20px; }
    .panes { flex: none; display: grid; grid-template-columns: 1728px 1724px; column-gap: 4px; height: 1877px; background: #4a4a5e; }
    .pane { position: relative; overflow: hidden; }
    .left { position: absolute; top: 50px; left: 868px; width: 860px; height: 1503px; }
    .right { position: absolute; top: 50px; left: 864px; width: 860px; height: 1372px; }
    .tip { position: absolute; left: 1495px; top: 826px; width: 1960px; height: 211px; box-sizing: border-box; background: #262626; border: 2px solid #66666a; display: flex; align-items: flex-start; color: #b6b0ca; font-size: 23.2px; line-height: 29.4px; }
    .key { width: 151px; flex: none; box-sizing: border-box; padding: 61px 0 0 6px; color: #6a6a6a; }
    .txt { padding-top: 1px; white-space: nowrap; }
    .w1 { letter-spacing: 0.8px; }
    .w2 { letter-spacing: 1.06px; }
    .edge { position: absolute; inset: auto 0 0 0; height: 2170px; border-radius: 20px 20px 18px 18px; border-bottom: 2px solid #6a6a6a; box-sizing: border-box; pointer-events: none; }
  `;

  private leftPars: Par[] = (
    [
      ["Pan3", 86], ["Pan_Fine3", 0], ["Tilt3", 63], ["Tilt_Fine3", 0], ["Pan_Tilt_Speed3", 0], ["Dimming3", 140],
      ["Dimming_Fine3", 0], ["Strobe3", 0], ["Cyan3", 120], ["Magenta3", 201], ["Yellow3", 178], ["CTO3", 0],
      ["CMY_Macro3", 0], ["Color3", 0], ["CRI3", 0], ["Gobo3", 0], ["Rotation_Gobo3", 0], ["Gobo_Rotation3", 0],
      ["Gobo_Rotation_Fine3", 0], ["Four_Prism3", 0], ["Four_Prism_Rotation3", 0], ["Eight_Prism3", 0],
      ["Eight_Prism_Rotation3", 2], ["Frost3", 0], ["Zoom3", 210], ["Zoom_Fine3", 0], ["Focus3", 255],
      ["Focus_Fine3", 0], ["Reset3", 0],
    ] as [string, number][]
  ).map(([label, v]) => ({ label, value: String(v), pos: v / 255, kind: label === "Eight_Prism3" ? "bound" : "plain" }));

  private rightPars: Par[] = [
    { label: "Mode", value: "0", pos: 0 },
    ...["0.0607", "0.6420", "0.1863", "0.0000", "0.0000", "0.1640", "0.1863", "0.1174", "0.4658", "0.3058"].flatMap((v, i): Par[] => [
      { label: `Light${i + 1} Prism`, value: "Off", kind: "toggle", sep: true },
      { label: `Light${i + 1} Prism Rotation`, value: v, pos: Number(v), kind: "bound", hot: i === 2 },
    ]),
  ];

  private layouts() {
    const s = ["", "M23 0V38", "M0 16.5H46", "M23 0V38M23 17.5H46", "M23 0V38M0 17.5H46"];
    return s.map((d) => html`<svg class="lo" width="46" height="38"><rect x=".75" y=".75" width="44.5" height="36.5" fill="#34363f" stroke="#5c5d62" stroke-width="1.5"/><path d=${d} stroke="#66676d" stroke-width="1.5"/></svg>`);
  }

  render() {
    const c = "#a6abc0";
    return html`
      <div class="desk"><div class="dot"></div></div>
      <div class="win">
        <div class="bar">
          <div class="l r"><i></i></div><div class="l y"></div><div class="l g"></div>
          <div class="cap">TouchDesigner 2023.11760: /Users/johnholmes/Documents/GitHub/Nashville-Drone-2025/Nashville-Drone-2025.108.toe*</div>
        </div>
        <div class="menu">
          <div class="m w">WIKI</div><div class="m w">FORUM</div><div class="m w">TUTORIALS</div>
          <div class="m io"><b>O|I</b></div><div class="m sixty">60</div><div class="m fps">FPS:  60</div>
          <div class="rt"><div class="box">X</div>Realtime</div>
          <div class="m msg">15:30:40 Save Project .toe: Nashville-Drone-2025.108.toe saved successfully.</div>
          <div class="m mr"></div>
        </div>
        <div class="lay">
          <div class="sq"><svg width="28" height="24" viewBox="0 0 28 24"><path d="M2 2H26V21H2Z" fill="none" stroke=${c} stroke-width="2"/><path d="M1 2H27" stroke=${c} stroke-width="3"/><path d="M6 16L14 7L22 16" fill="none" stroke=${c} stroke-width="2"/></svg></div>
          <div class="sq"><svg width="28" height="26" viewBox="0 0 28 26"><path d="M14 1L20 8H16V15H12V8H8Z" fill=${c}/><path d="M1 12L6 14V18L14 20L22 18V14L27 12V19L14 25L1 19Z" fill=${c}/></svg></div>
          <div class="bar2 a"></div>
          <div class="pl">Pane Layout</div>
          ${this.layouts()}
          <div class="bar2 b"></div>
          <div class="pl nl">New Layout</div>
          <div class="sq"><svg width="22" height="22"><path d="M11 1V21M1 11H21" stroke=${c} stroke-width="3"/></svg></div>
        </div>
        <div class="panes">
          <div class="pane">
            <pane-header path="/ project1 / COMM / DMX_OUT / >>"></pane-header>
            <network-left></network-left>
            <param-panel class="left" name="S712_CHOPS" .tabs=${["INFO", "LIGHT7", "LIGHT8", "LIGHT2", "LIGHT3"]} active="LIGHT3" .pars=${this.leftPars}></param-panel>
          </div>
          <div class="pane">
            <pane-header path="/ project1 / GEN / LIGHTS / >>"></pane-header>
            <network-right></network-right>
            <param-panel class="right" name="LIGHT_PRISMS" .tabs=${["SETTINGS"]} active="SETTINGS" .pars=${this.rightPars}></param-panel>
          </div>
        </div>
        <time-line></time-line>
        <div class="tip">
          <div class="key">Light3prot</div>
          <div class="txt">
            <div>0.186304</div>
            <div class="w1">Bound To: ./PRISM_ROTATIONS Light3prism (Optimized)</div>
            <div>Bound From:</div>
            <div class="w2">../../UI/DMX_CONTROLS/PRISM_CONTROLS/PRISM_CONTROL_MODE0/PRISM_UI12/PRISM_KNOBS/rotation_and_previz/PRISM_PREVIZ12 Rotation</div>
            <div class="w2">Bound From: ../../UI/DMX_CONTROLS/PRISM_CONTROLS/PRISM_CONTROL_MODE0/PRISM_UI12/PRISM_KNOBS/rotation_and_previz/knobFixed</div>
            <div>Value0</div>
          </div>
        </div>
        <div class="edge"></div>
      </div>`;
  }
}
